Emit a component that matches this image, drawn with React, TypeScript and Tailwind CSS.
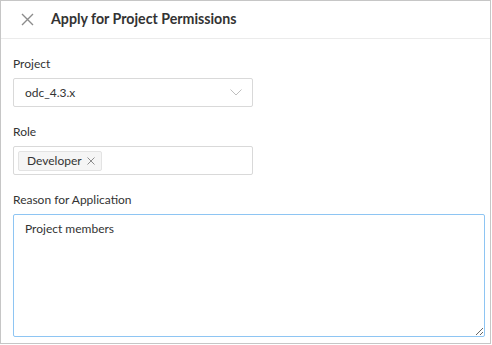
import React from "react";

const FONT = 'Lato, "Noto Sans", sans-serif';

export default function App() {
  return (
    <div className="w-[492px] h-[345px] bg-white" style={{ fontFamily: FONT }}>
      <div className="w-[491px] h-[344px] border border-[#c6c6c6] flex flex-col">
        <div className="h-[38px] border-b border-[#ebebeb] flex items-center shrink-0">
          <div className="w-[50px] flex justify-center pl-[2px]">
            <svg width="13" height="13" viewBox="0 0 13 13" fill="none" stroke="#8c8c8c" strokeWidth="1.4">
              <path d="M1 1L12 12M12 1L1 12" />
            </svg>
          </div>
          <div className="text-[14.2px] font-bold text-[#333] leading-none">Apply for Project Permissions</div>
        </div>
        <div className="flex flex-col px-[12px] pt-[16px]">
          <div className="text-[12px] text-[#333] leading-[18px] mb-[5px]">Project</div>
          <div className="w-[240px] h-[29px] border border-[#d9d9d9] rounded-[2px] flex items-center justify-between pl-[11px] pr-[10px]">
            <span className="text-[12px] text-[#333]">odc_4.3.x</span>
            <svg width="12" height="7" viewBox="0 0 12 7" fill="none" stroke="#bfbfbf" strokeWidth="1">
              <path d="M0.5 0.5L6 6L11.5 0.5" />
            </svg>
          </div>
          <div className="text-[12px] text-[#333] leading-[18px] mt-[16px] mb-[5px]">Role</div>
          <div className="w-[240px] h-[29px] border border-[#d9d9d9] rounded-[2px] flex items-center pl-[4px]">
            <div className="h-[20px] bg-[#f5f5f5] border border-[#e3e3e3] rounded-[2px] flex items-center pl-[8px] pr-[6px] gap-[5px]">
              <span className="text-[12px] text-[#333]">Developer</span>
              <svg width="8" height="8" viewBox="0 0 8 8" fill="none" stroke="#8c8c8c" strokeWidth="1">
                <path d="M0.5 0.5L7.5 7.5M7.5 0.5L0.5 7.5" />
              </svg>
            </div>
          </div>
          <div className="text-[12px] text-[#333] leading-[18px] mt-[16px] mb-[5px]">Reason for Application</div>
          <textarea
            className="w-[472px] h-[123px] border border-[#8ec5f3] rounded-[2px] px-[11px] py-[5px] text-[12px] text-[#333] outline-none resize-y"
            style={{ fontFamily: FONT }}
            defaultValue="Project members"
          />
        </div>
      </div>
    </div>
  );
}
